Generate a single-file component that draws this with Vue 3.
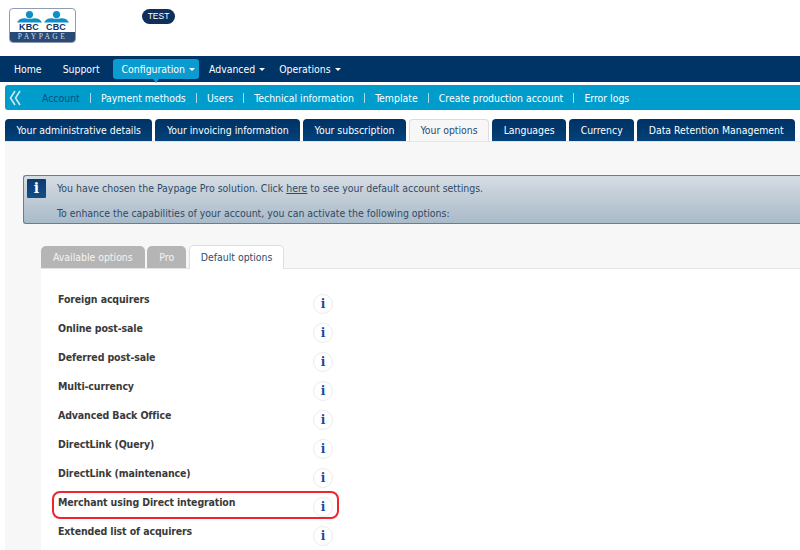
<template>
  <div class="page">
    <header class="head">
      <div class="logo">
        <div class="logo-top">
          <div class="brand" v-for="b in ['KBC', 'CBC']" :key="b">
            <svg width="25" height="12" viewBox="0 0 25 12">
              <circle cx="12.5" cy="3.6" r="3.6" fill="#0f8fc8" />
              <path d="M0 11.5 Q2 7 8 7.2 Q12.5 8.2 17 7.2 Q23 7 25 11.5 Z" fill="#0f8fc8" />
            </svg>
            <span>{{ b }}</span>
          </div>
        </div>
        <div class="logo-bottom">PAYPAGE</div>
      </div>
      <span class="badge">TEST</span>
    </header>

    <nav class="main-nav">
      <a v-for="m in mainMenu" :key="m.label" class="m-item" :class="{ active: m.active }">
        {{ m.label }}<i v-if="m.caret" class="caret"></i>
      </a>
    </nav>

    <div class="sub-nav">
      <svg class="chev" width="13" height="16" viewBox="0 0 13 16" fill="none" stroke="#cfeaf5" stroke-width="1.6">
        <path d="M6 1 L1.5 8 L6 15" /><path d="M11 1 L6.5 8 L11 15" />
      </svg>
      <template v-for="(s, i) in subMenu" :key="s">
        <span v-if="i" class="sep"></span>
        <a class="s-item" :class="{ current: i === 0 }">{{ s }}</a>
      </template>
    </div>

    <div class="tabs">
      <a v-for="t in tabs" :key="t" class="tab" :class="{ on: t === 'Your options' }">{{ t }}</a>
    </div>

    <main class="panel">
      <div class="info">
        <div class="info-icon">i</div>
        <div class="info-text">
          <p>You have chosen the Paypage Pro solution. Click <u>here</u> to see your default account settings.</p>
          <p>To enhance the capabilities of your account, you can activate the following options:</p>
        </div>
      </div>

      <div class="in-tabs">
        <a class="in-tab">Available options</a>
        <a class="in-tab">Pro</a>
        <a class="in-tab on">Default options</a>
      </div>

      <section class="options">
        <div v-for="o in options" :key="o" class="row" :class="{ mark: o === marked }">
          <span class="name">{{ o }}</span>
          <span class="dot">i</span>
        </div>
      </section>
    </main>
  </div>
</template>

<script setup>
const mainMenu = [
  { label: 'Home' },
  { label: 'Support' },
  { label: 'Configuration', caret: true, active: true },
  { label: 'Advanced', caret: true },
  { label: 'Operations', caret: true },
]
const subMenu = ['Account', 'Payment methods', 'Users', 'Technical information', 'Template', 'Create production account', 'Error logs']
const tabs = ['Your administrative details', 'Your invoicing information', 'Your subscription', 'Your options', 'Languages', 'Currency', 'Data Retention Management']
const options = ['Foreign acquirers', 'Online post-sale', 'Deferred post-sale', 'Multi-currency', 'Advanced Back Office', 'DirectLink (Query)', 'DirectLink (maintenance)', 'Merchant using Direct integration', 'Extended list of acquirers']
const marked = 'Merchant using Direct integration'
</script>

<style>
html, body { margin: 0; background: #fff; overflow: hidden; }
</style>

<style scoped>
.page {
  width: 800px;
  height: 550px;
  overflow: hidden;
  font-family: "DejaVu Sans Condensed", "DejaVu Sans", sans-serif;
  font-stretch: condensed;
  font-size: 10.4px;
  color: #333;
  background: #fff;
  display: flex;
  flex-direction: column;
}
.head {
  height: 56px;
  flex: none;
  display: flex;
  align-items: flex-start;
  padding: 8px 0 0 9px;
  box-sizing: border-box;
}
.logo {
  width: 67px;
  height: 35px;
  box-sizing: border-box;
  border: 1px solid #8f9bb5;
  border-radius: 4px;
  overflow: hidden;
  display: flex;
  flex-direction: column;
}
.logo-top {
  flex: 1;
  display: flex;
  justify-content: center;
  gap: 2px;
  padding-top: 2px;
}
.brand { width: 25px; height: 21px; position: relative; }
.brand svg { display: block; }
.brand span {
  position: absolute;
  left: -1px;
  right: -1px;
  top: 12px;
  text-align: center;
  font: bold 9px/9px "Liberation Sans", sans-serif;
  font-stretch: normal;
  letter-spacing: 0.2px;
  color: #12335f;
}
.logo-bottom {
  height: 10px;
  background: #284a75;
  color: #d4dce6;
  font: 7.5px/10px "Liberation Serif", serif;
  font-stretch: normal;
  letter-spacing: 2.4px;
  text-align: center;
}
.badge {
  margin: 1px 0 0 66px;
  width: 33px;
  height: 15px;
  border-radius: 8px;
  background: #0f2f5c;
  color: #fff;
  font: 8.5px/15px "Liberation Sans", sans-serif;
  font-stretch: normal;
  text-align: center;
}
.main-nav {
  height: 26px;
  flex: none;
  background: #003366;
  display: flex;
  align-items: center;
  padding-left: 7px;
  box-sizing: border-box;
}
.m-item {
  color: #fff;
  height: 20px;
  line-height: 20px;
  padding: 0 7px;
  border-radius: 3px;
  white-space: nowrap;
  position: relative;
}
.m-item:first-child { margin-right: 7px; }
.m-item.active {
  background: #0a9bd0;
  padding: 0 4px 0 9px;
  margin: 0 3px 0 6px;
}
.m-item.active::after {
  content: "";
  position: absolute;
  left: 50%;
  top: 20px;
  margin-left: -3px;
  border-left: 3px solid transparent;
  border-right: 3px solid transparent;
  border-top: 4px solid #0a9bd0;
}
.caret {
  display: inline-block;
  margin-left: 4px;
  vertical-align: 2px;
  border-left: 3.5px solid transparent;
  border-right: 3.5px solid transparent;
  border-top: 3.5px solid #fff;
}
.sub-nav {
  margin: 3px 0 0 5px;
  height: 25px;
  flex: none;
  background: #009ccc;
  border-radius: 3px 0 0 3px;
  display: flex;
  align-items: center;
  padding-left: 4px;
  box-sizing: border-box;
}
.chev { margin-right: 20px; }
.s-item { color: #fff; white-space: nowrap; }
.s-item.current { color: #084f80; }
.sep { width: 1px; height: 10px; background: #a9dcee; margin: 0 10.1px; }
.tabs {
  margin: 9px 0 0 5px;
  height: 22px;
  flex: none;
  display: flex;
  gap: 3px;
}
.tab {
  height: 22px;
  line-height: 22px;
  padding: 0 11.5px;
  border-radius: 4px 4px 0 0;
  background: linear-gradient(#003366, #003a70 60%, #05437c);
  color: #fff;
  white-space: nowrap;
  box-sizing: border-box;
}
.tab.on {
  background: #f7f7f7;
  color: #2c4c6f;
  border: 1px solid #dcdcdc;
  border-bottom: 0;
  line-height: 21px;
  padding: 0 10.5px;
}
.panel {
  flex: 1;
  margin-left: 5px;
  background: #f7f7f7;
  border-top: 1px solid #e4e4e4;
  padding: 33px 0 0 18px;
  min-height: 0;
}
.info {
  height: 49px;
  box-sizing: border-box;
  border: 1px solid #5f7fa0;
  border-right: 0;
  border-radius: 3px 0 0 3px;
  background: linear-gradient(#d6dce3, #a9bac9);
  display: flex;
  padding: 3px 0 0 3px;
}
.info-icon {
  width: 19px;
  height: 19px;
  background: linear-gradient(#0b3a6c, #0f4f8a);
  color: #fff;
  font: bold 14px/19px "DejaVu Serif", serif;
  font-stretch: normal;
  text-align: center;
  margin-right: 11px;
  border-radius: 1px;
}
.info-text { color: #2d4a66; font-size: 10.45px; }
.info-text p { margin: 0; line-height: 25px; height: 25px; white-space: nowrap; position: relative; top: -3px; }
.in-tabs {
  margin: 21px 0 0 18px;
  height: 23px;
  display: flex;
  gap: 2.7px;
}
.in-tab {
  background: #b5b5b5;
  color: #f4f4f4;
  height: 22px;
  margin-top: 1px;
  line-height: 22px;
  padding: 0 12px;
  border-radius: 5px 5px 0 0;
  white-space: nowrap;
}
.in-tab.on {
  background: #fff;
  color: #2c4c6f;
  border: 1px solid #dedede;
  border-bottom: 0;
  margin-top: 0;
  height: 23px;
  padding: 0 11px;
}
.options {
  margin-left: 18px;
  background: #fff;
  border-top: 1px solid #e4e4e4;
  height: 300px;
  padding: 17px 0 0 14px;
}
.row {
  height: 29px;
  width: 284px;
  box-sizing: border-box;
  position: relative;
  padding: 7px 0 0 3px;
}
.name { font-size: 10.5px; font-weight: bold; color: #3a3a3a; letter-spacing: -0.12px; }
.dot {
  position: absolute;
  left: 258px;
  top: 8px;
  width: 18px;
  height: 18px;
  border: 1px solid #ececec;
  border-radius: 50%;
  background: #fff;
  color: #1a4a9e;
  font: bold 12px/18px "DejaVu Serif", serif;
  font-stretch: normal;
  text-align: center;
}
.row.mark::before {
  content: "";
  position: absolute;
  left: -3px;
  top: 2px;
  width: 287px;
  height: 28px;
  border: 2px solid #ee2430;
  border-radius: 8px;
  box-sizing: border-box;
}
</style>
